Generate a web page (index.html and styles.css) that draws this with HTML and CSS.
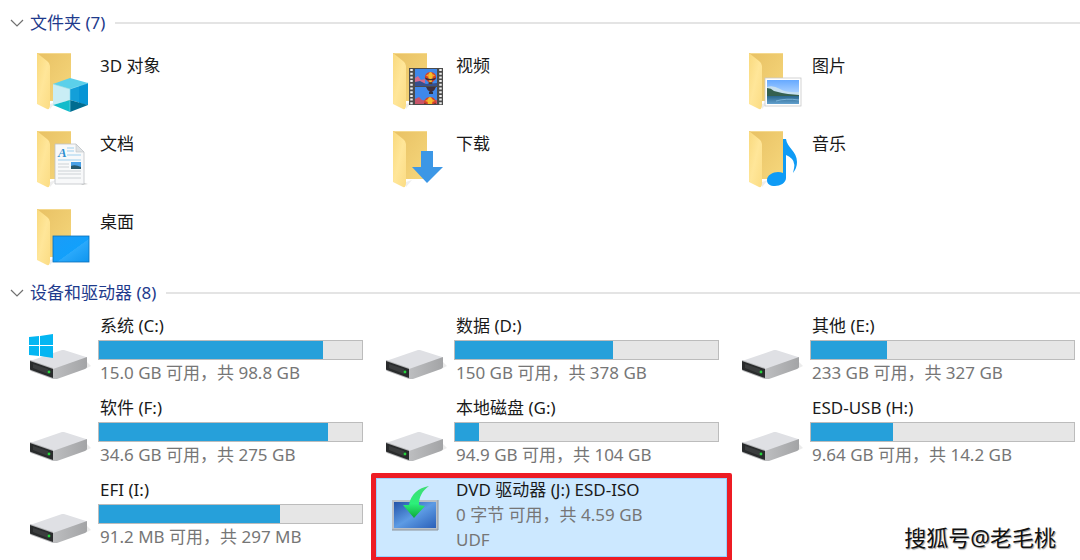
FILE: index.html
```html
<!DOCTYPE html>
<html lang="zh-CN">
<head>
    <meta charset="UTF-8">
    <meta name="viewport" content="width=device-width, initial-scale=1.0">
    <link rel="stylesheet" href="styles.css">
    <title>此电脑</title>
</head>

<body>
    <!-- shared icon parts -->
    <svg class="defs" aria-hidden="true">
        <defs>
            <linearGradient id="back" x1="0" y1="0" x2="1" y2="1">
                <stop offset="0" stop-color="#e8c164"/>
                <stop offset="1" stop-color="#f6d77c"/>
            </linearGradient>
            <linearGradient id="flap" x1="0" y1="0" x2="1" y2="1">
                <stop offset="0" stop-color="#f9d97d"/>
                <stop offset="0.5" stop-color="#ffe699"/>
                <stop offset="1" stop-color="#fbdc84"/>
            </linearGradient>
            <linearGradient id="side" x1="0" y1="0" x2="1" y2="0">
                <stop offset="0" stop-color="#bdbec0"/>
                <stop offset="1" stop-color="#a3a4a6"/>
            </linearGradient>
            <linearGradient id="desk" x1="0" y1="0" x2="1" y2="1">
                <stop offset="0" stop-color="#1a9cf8"/>
                <stop offset="0.55" stop-color="#12a0fb"/>
                <stop offset="0.56" stop-color="#2aa9fb"/>
                <stop offset="1" stop-color="#0f95ef"/>
            </linearGradient>
            <linearGradient id="screen" x1="0" y1="0" x2="1" y2="1">
                <stop offset="0" stop-color="#2453a8"/>
                <stop offset="0.5" stop-color="#5d9be4"/>
                <stop offset="1" stop-color="#2a5fb8"/>
            </linearGradient>
            <linearGradient id="green" x1="0" y1="0" x2="0" y2="1">
                <stop offset="0" stop-color="#3fdc74"/>
                <stop offset="0.55" stop-color="#2cf07a"/>
                <stop offset="1" stop-color="#0fa838"/>
            </linearGradient>
            <linearGradient id="sky" x1="0" y1="0" x2="0" y2="1">
                <stop offset="0" stop-color="#66a9ff"/>
                <stop offset="1" stop-color="#e4f3ff"/>
            </linearGradient>
            <linearGradient id="sea" x1="0" y1="0" x2="0" y2="1">
                <stop offset="0" stop-color="#2a668c"/>
                <stop offset="1" stop-color="#62a0ce"/>
            </linearGradient>
            <symbol id="folder" viewBox="0 0 64 64">
                <path d="M9 3H43V51H20L9 40Z" fill="url(#back)"/>
                <path d="M9 3H43V4H11Z" fill="#f5d98e"/>
                <path d="M9 3L19 11Q22 13 22 16V55Q22 60 19 59L9 54Z" fill="url(#flap)"/>
                <path d="M22 54L28 52L22 59Z" fill="#dddddd" opacity="0.5"/>
            </symbol>
            <symbol id="drive" viewBox="0 0 64 72">
                <path d="M25 65L59 54L63 52L59 48Z" fill="#d8d8d8" opacity="0.5"/>
                <path d="M2 47L34 36Q35 36 36 36L58 43L59 44L25 56Z" fill="#dfe0e4"/>
                <path d="M25 55L59 43V53Q59 54 57 55L29 65L25 65Z" fill="url(#side)"/>
                <path d="M2 46L25 54V65L3 57Q2 57 2 55Z" fill="#b4b5b7"/>
                <path d="M2 47L25 55V64L3 56Q2 56 2 55Z" fill="#292b2c"/>
                <path d="M5 50L20 55V60L5 54Z" fill="#3b3d3e"/>
                <circle cx="21" cy="58" r="1.4" fill="#26d43c"/>
            </symbol>
            <symbol id="balloon" viewBox="0 0 14 14">
                <path d="M7 0C3 0 1 3 1 6Q1 8 5 11H9Q13 8 13 6C13 3 11 0 7 0Z" fill="#d6402a"/>
                <path d="M7 0C4 1 4 5 6 11H8C10 5 10 1 7 0Z" fill="#f4bd2c"/>
                <path d="M1 6Q7 9 13 6L12 8Q7 10 2 8Z" fill="#3b2c38"/>
                <path d="M2 4L5 2V5ZM12 4L9 2V5Z" fill="#f4a82a"/>
                <rect x="5" y="11" width="4" height="2" fill="#5a3a1a"/>
            </symbol>
        </defs>
    </svg>

    <main class="explorer">
        <section>
            <h2 class="group">
                <button type="button" class="group-toggle" aria-expanded="true">
                    <svg class="chevron" viewBox="0 0 14 8"><path d="M1 1L7 7L13 1" fill="none" stroke="#707070" stroke-width="1.2"/></svg>
                    文件夹 (7)
                </button>
            </h2>
            <ul class="grid folders">
                <li class="tile">
                    <svg class="icon" viewBox="0 0 64 64">
                        <use href="#folder"/>
                        <path d="M42 28L60 33L42 39L25 34Z" fill="#5cd0ea"/>
                        <path d="M25 34L42 39V50L25 55Z" fill="#c9edf5"/>
                        <path d="M60 33L42 39V50L60 55Z" fill="#139fd9"/>
                        <path d="M60 33L51 36V53L60 55Z" fill="#0795d5"/>
                        <path d="M25 55L42 50V62Z" fill="#12bccb"/>
                        <path d="M60 55L42 50V62Z" fill="#006c90"/>
                        <path d="M42 39V62M25 34L42 39L60 33" fill="none" stroke="#7fdcf0" stroke-width="0.6"/>
                    </svg>
                    <span class="name">3D 对象</span>
                </li>
                <li class="tile">
                    <svg class="icon" viewBox="0 0 64 64">
                        <use href="#folder"/>
                        <rect x="25" y="18" width="34" height="37" fill="#4b4b4b"/>
                        <path d="M27.5 19V55M56.5 19V55" stroke="#eeeeee" stroke-width="2.5" stroke-dasharray="2 1.7"/>
                        <rect x="31" y="19" width="22" height="17" fill="#3f88ea"/>
                        <rect x="31" y="37" width="22" height="17" fill="#3f88ea"/>
                        <path d="M31 28L34 26L37 30L41 29V36H31Z" fill="#d36a8c"/>
                        <path d="M31 32L36 31L42 34L53 33V36H31Z" fill="#35508f"/>
                        <path d="M31 49L35 47L38 50L44 51L53 50V54H31Z" fill="#c8556a"/>
                        <use href="#balloon" x="40" y="22" width="13" height="13"/>
                        <path d="M42 37H52Q51 40 48 42H46Q43 40 42 37Z" fill="#40303c"/>
                        <rect x="45" y="42" width="4" height="2" fill="#303040"/>
                        <svg x="39" y="47" width="14" height="7" viewBox="0 0 14 7"><use href="#balloon" width="14" height="14"/></svg>
                    </svg>
                    <span class="name">视频</span>
                </li>
                <li class="tile">
                    <svg class="icon" viewBox="0 0 64 64">
                        <use href="#folder"/>
                        <rect x="25" y="28" width="36" height="28" fill="#ffffff" stroke="#c9c9c9" stroke-width="0.8"/>
                        <rect x="27" y="30" width="32" height="24" fill="url(#sky)"/>
                        <path d="M27 37Q33 35 40 39T59 42V46H27Z" fill="#c6dfef"/>
                        <path d="M27 38Q31 38 34 41L42 43L48 44L59 45V47H27Z" fill="#35604f"/>
                        <rect x="27" y="46" width="32" height="8" fill="url(#sea)"/>
                        <path d="M36 51Q46 48 59 50" fill="none" stroke="#86bce0" stroke-width="0.8"/>
                    </svg>
                    <span class="name">图片</span>
                </li>
                <li class="tile">
                    <svg class="icon" viewBox="0 0 64 64">
                        <use href="#folder"/>
                        <path d="M52 54L60 56L54 57Z" fill="#cccccc"/>
                        <path d="M27 16H48L56 24V56H27Z" fill="#f8f9fa" stroke="#bfc3c6" stroke-width="0.8"/>
                        <path d="M48 16V24H56Z" fill="#dfe3e6" stroke="#bfc3c6" stroke-width="0.6"/>
                        <text class="doc-letter" x="30" y="29">A</text>
                        <path d="M39 20H46M39 23H46M39 27H53M30 32H53" stroke="#9fd0ee" stroke-width="1"/>
                        <path d="M30 36H41M30 39H41M30 43H53M30 46H53M30 50H53" stroke="#cdd2d6" stroke-width="1"/>
                        <rect x="43" y="34" width="10" height="7" fill="#4aa0e6"/>
                        <path d="M43 38Q47 36 53 39V41H43Z" fill="#28586c"/>
                    </svg>
                    <span class="name">文档</span>
                </li>
                <li class="tile">
                    <svg class="icon" viewBox="0 0 64 64">
                        <use href="#folder"/>
                        <path d="M37 23H49V39H59L43 55L28 39H37Z" fill="#3c97e6"/>
                    </svg>
                    <span class="name">下载</span>
                </li>
                <li class="tile">
                    <svg class="icon" viewBox="0 0 64 64">
                        <use href="#folder"/>
                        <path d="M43 11H46C47 20 57 23 57 34Q57 40 53 45Q56 35 52 31Q49 28 46 27V50C46 55 40 58 35 58C30 58 27 56 27 52C27 47 33 44 38 44Q41 44 43 45Z" fill="#0f9bf5"/>
                    </svg>
                    <span class="name">音乐</span>
                </li>
                <li class="tile">
                    <svg class="icon" viewBox="0 0 64 64">
                        <use href="#folder"/>
                        <rect x="25" y="30" width="36" height="26" fill="url(#desk)" stroke="#0c6fb8" stroke-width="0.8"/>
                    </svg>
                    <span class="name">桌面</span>
                </li>
            </ul>
        </section>

        <section>
            <h2 class="group">
                <button type="button" class="group-toggle" aria-expanded="true">
                    <svg class="chevron" viewBox="0 0 14 8"><path d="M1 1L7 7L13 1" fill="none" stroke="#707070" stroke-width="1.2"/></svg>
                    设备和驱动器 (8)
                </button>
            </h2>
            <ul class="grid drives">
                <li class="tile">
                    <svg class="icon" viewBox="0 0 64 72">
                        <use href="#drive"/>
                        <path d="M1 23L11 22V31H1ZM12 22L25 20V31H12ZM1 32H11V42L1 41ZM12 32H25V44L12 42Z" fill="#04b6f2"/>
                    </svg>
                    <div class="info">
                        <span class="name">系统 (C:)</span>
                        <div class="bar"><div class="used" style="width: 85%"></div></div>
                        <span class="status">15.0 GB 可用，共 98.8 GB</span>
                    </div>
                </li>
                <li class="tile">
                    <svg class="icon" viewBox="0 0 64 72"><use href="#drive"/></svg>
                    <div class="info">
                        <span class="name">数据 (D:)</span>
                        <div class="bar"><div class="used" style="width: 60%"></div></div>
                        <span class="status">150 GB 可用，共 378 GB</span>
                    </div>
                </li>
                <li class="tile">
                    <svg class="icon" viewBox="0 0 64 72"><use href="#drive"/></svg>
                    <div class="info">
                        <span class="name">其他 (E:)</span>
                        <div class="bar"><div class="used" style="width: 29%"></div></div>
                        <span class="status">233 GB 可用，共 327 GB</span>
                    </div>
                </li>
                <li class="tile">
                    <svg class="icon" viewBox="0 0 64 72"><use href="#drive"/></svg>
                    <div class="info">
                        <span class="name">软件 (F:)</span>
                        <div class="bar"><div class="used" style="width: 87%"></div></div>
                        <span class="status">34.6 GB 可用，共 275 GB</span>
                    </div>
                </li>
                <li class="tile">
                    <svg class="icon" viewBox="0 0 64 72"><use href="#drive"/></svg>
                    <div class="info">
                        <span class="name">本地磁盘 (G:)</span>
                        <div class="bar"><div class="used" style="width: 9%"></div></div>
                        <span class="status">94.9 GB 可用，共 104 GB</span>
                    </div>
                </li>
                <li class="tile">
                    <svg class="icon" viewBox="0 0 64 72"><use href="#drive"/></svg>
                    <div class="info">
                        <span class="name">ESD-USB (H:)</span>
                        <div class="bar"><div class="used" style="width: 31%"></div></div>
                        <span class="status">9.64 GB 可用，共 14.2 GB</span>
                    </div>
                </li>
                <li class="tile">
                    <svg class="icon" viewBox="0 0 64 72"><use href="#drive"/></svg>
                    <div class="info">
                        <span class="name">EFI (I:)</span>
                        <div class="bar"><div class="used" style="width: 69%"></div></div>
                        <span class="status">91.2 MB 可用，共 297 MB</span>
                    </div>
                </li>
                <li class="tile selected">
                    <svg class="icon" viewBox="0 0 64 72">
                        <rect x="8" y="22" width="46" height="30" fill="#b9c0c8"/>
                        <path d="M8 52H54V22" fill="none" stroke="#8d949c" stroke-width="1"/>
                        <rect x="10" y="24" width="42" height="26" fill="url(#screen)"/>
                        <path d="M45 8C34 10 27 16 25 27L19 27L30 40L41 28L35 27C35 19 38 13 45 8Z" fill="url(#green)"/>
                    </svg>
                    <div class="info">
                        <span class="name">DVD 驱动器 (J:) ESD-ISO</span>
                        <span class="status">0 字节 可用，共 4.59 GB</span>
                        <span class="status">UDF</span>
                    </div>
                </li>
            </ul>
        </section>
    </main>

    <div class="watermark">搜狐号@老毛桃</div>
</body>
</html>
```

FILE: styles.css
```css
* {
    box-sizing: border-box;
}

body {
    margin: 0;
    min-height: 100vh;
    position: relative;
    overflow: hidden;
    background: #ffffff;
    color: #1a1a1a;
    font-family: "Noto Sans", "Noto Sans CJK SC", sans-serif;
    font-size: 17px;
    line-height: 24px;
}

.defs {
    position: absolute;
    width: 0;
    height: 0;
}

.explorer {
    padding-top: 12px;
}

.group {
    display: flex;
    align-items: center;
    gap: 10px;
    margin: 0 0 10px;
    padding-left: 10px;
}

.group::after {
    content: "";
    flex: 1;
    height: 2px;
    background: #e4e4e4;
}

.group-toggle {
    display: flex;
    align-items: center;
    gap: 6px;
    padding: 0;
    border: none;
    background: transparent;
    color: #1e3a8c;
    font-family: inherit;
    font-size: 17px;
    line-height: 22px;
    cursor: pointer;
}

.chevron {
    width: 14px;
    height: 8px;
}

.grid {
    display: grid;
    grid-template-columns: repeat(3, 1fr);
    margin: 0;
    padding: 0 0 0 12px;
    list-style: none;
}

.folders {
    padding-top: 4px;
    grid-auto-rows: 78px;
}

.drives {
    row-gap: 10px;
}

.tile {
    display: flex;
    align-items: flex-start;
    gap: 6px;
    padding: 0 5px 0 16px;
}

.icon {
    flex: none;
    width: 64px;
}

.folders .icon {
    height: 64px;
    margin-top: 2px;
}

.drives .icon {
    height: 72px;
}

.name,
.status {
    display: block;
    padding-left: 2px;
    white-space: nowrap;
}

.folders .name {
    margin-top: 6px;
}

.status {
    color: #767676;
}

.doc-letter {
    font-family: "Liberation Serif", serif;
    font-size: 13px;
    font-style: italic;
    font-weight: bold;
    fill: #2d8fd0;
}

.info {
    flex: 1;
    min-width: 0;
}

.bar {
    height: 20px;
    margin: 2px 0 1px;
    border: 1px solid #bcbcbc;
    background: #e6e6e6;
}

.used {
    height: 100%;
    background: #26a0da;
}

/* selected drive, ringed in red */
.selected {
    position: relative;
    z-index: 0;
}

.selected::before {
    content: "";
    position: absolute;
    z-index: -1;
    inset: -5px -8px -10px 3px;
    border: 5px solid #ed1c24;
    border-radius: 2px;
    background: #cce8ff;
    box-shadow: inset 0 0 0 1px #99d1ff;
}

.selected .status {
    margin-top: 1px;
}

.watermark {
    position: absolute;
    right: 24px;
    bottom: 8px;
    font-size: 22px;
    line-height: 30px;
    color: #111111;
    text-shadow: -1px -1px 0 #ffffff, 1px 1px 1px #999999;
}
```
